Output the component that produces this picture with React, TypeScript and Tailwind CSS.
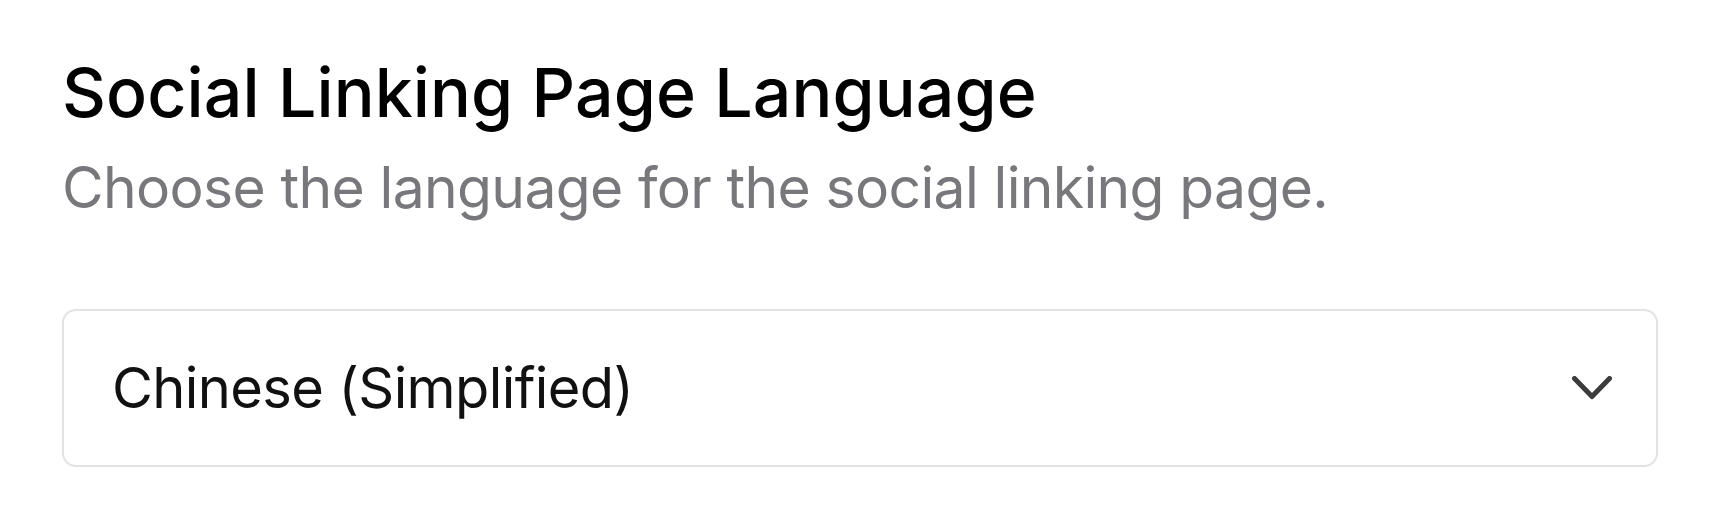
export default function App() {
  return (
    <main className="min-h-screen bg-white px-[62px] pt-[52px] font-['Inter',sans-serif]">
      <h2 className="text-[68px] leading-[80px] font-medium tracking-[0.1px] text-black">Social Linking Page Language</h2>
      <p className="mt-[21px] text-[57px] leading-[70px] tracking-[-0.65px] text-[#77777c]">Choose the language for the social linking page.</p>

      <div className="mt-[86px] w-[1596px] h-[158px] rounded-[14px] border-2 border-[#e3e3e3] flex items-center justify-between pl-[48px] pr-[44px]">
        <span className="text-[56px] tracking-[-0.6px] text-[#111]">Chinese (Simplified)</span>
        <svg width="40" height="24" viewBox="0 0 40 24" fill="none" className="text-[#3c3c3e]">
          <polyline points="2.5,2.5 20,20.5 37.5,2.5" stroke="currentColor" strokeWidth="5" strokeLinecap="round" strokeLinejoin="round" />
        </svg>
      </div>
    </main>
  );
}
